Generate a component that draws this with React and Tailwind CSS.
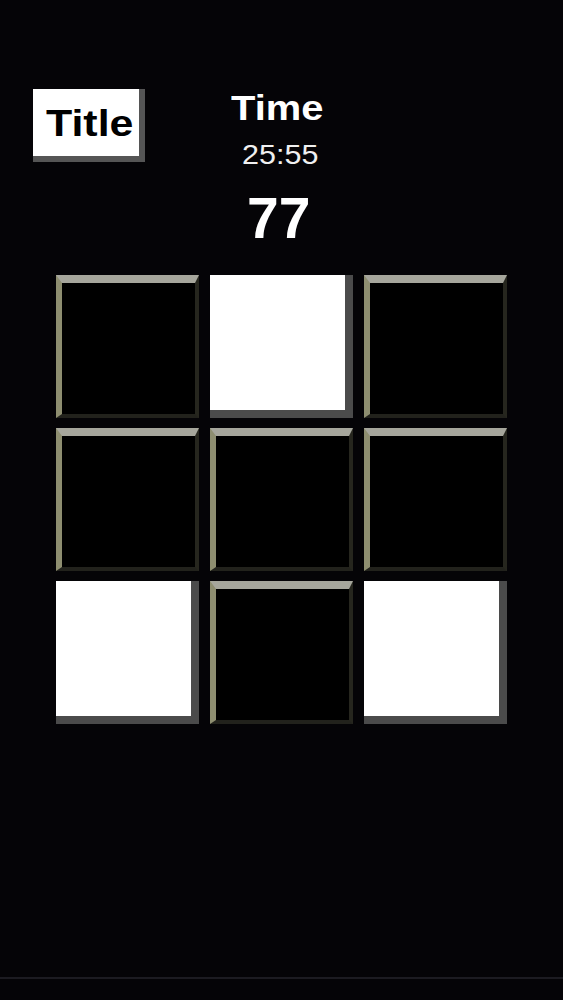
import React from "react";

const tiles = [0, 1, 0, 0, 0, 0, 1, 0, 1];

function Tile({ on }) {
  if (on) {
    return (
      <div className="w-[143px] h-[143px] bg-white border-r-[8px] border-b-[8px] border-r-[#4b4b4b] border-b-[#4b4b4b]" />
    );
  }
  return (
    <div className="w-[143px] h-[143px] bg-black border-t-[8px] border-l-[6px] border-r-[4px] border-b-[4px] border-t-[#a6a69c] border-l-[#8e8e70] border-r-[#26261e] border-b-[#22221c]" />
  );
}

export default function App() {
  return (
    <div
      className="w-[563px] h-[1000px] bg-[#050407] flex flex-col text-white"
      style={{ fontFamily: '"Liberation Sans", Arial, sans-serif' }}
    >
      {/* header */}
      <div className="flex items-start pt-[89px] pl-[33px]">
        <div className="w-[112px] h-[73px] shrink-0 bg-white border-r-[6px] border-b-[6px] border-r-[#555555] border-b-[#555555] pl-[13px] pt-[16px]">
          <span className="block origin-left scale-x-[1.16] text-black font-bold text-[37px] leading-none">
            Title
          </span>
        </div>
        <div className="ml-[86px] mt-[1px] flex flex-col items-start">
          <span className="block origin-left scale-x-[1.14] text-[35px] font-bold leading-none">
            Time
          </span>
          <span className="block ml-[11px] mt-[16px] origin-left scale-x-[1.09] text-[28px] leading-none text-[#f0f0f0]">
            25:55
          </span>
          <span className="block ml-[16px] mt-[21px] text-[57px] font-bold leading-none">77</span>
        </div>
      </div>

      {/* board */}
      <div className="ml-[56px] mt-[28px] grid grid-cols-[143px_143px_143px] gap-x-[11px] gap-y-[10px]">
        {tiles.map((t, i) => (
          <Tile key={i} on={t === 1} />
        ))}
      </div>

      <div className="mt-auto mb-[21px] h-[2px] bg-[#1c1b21]" />
    </div>
  );
}
